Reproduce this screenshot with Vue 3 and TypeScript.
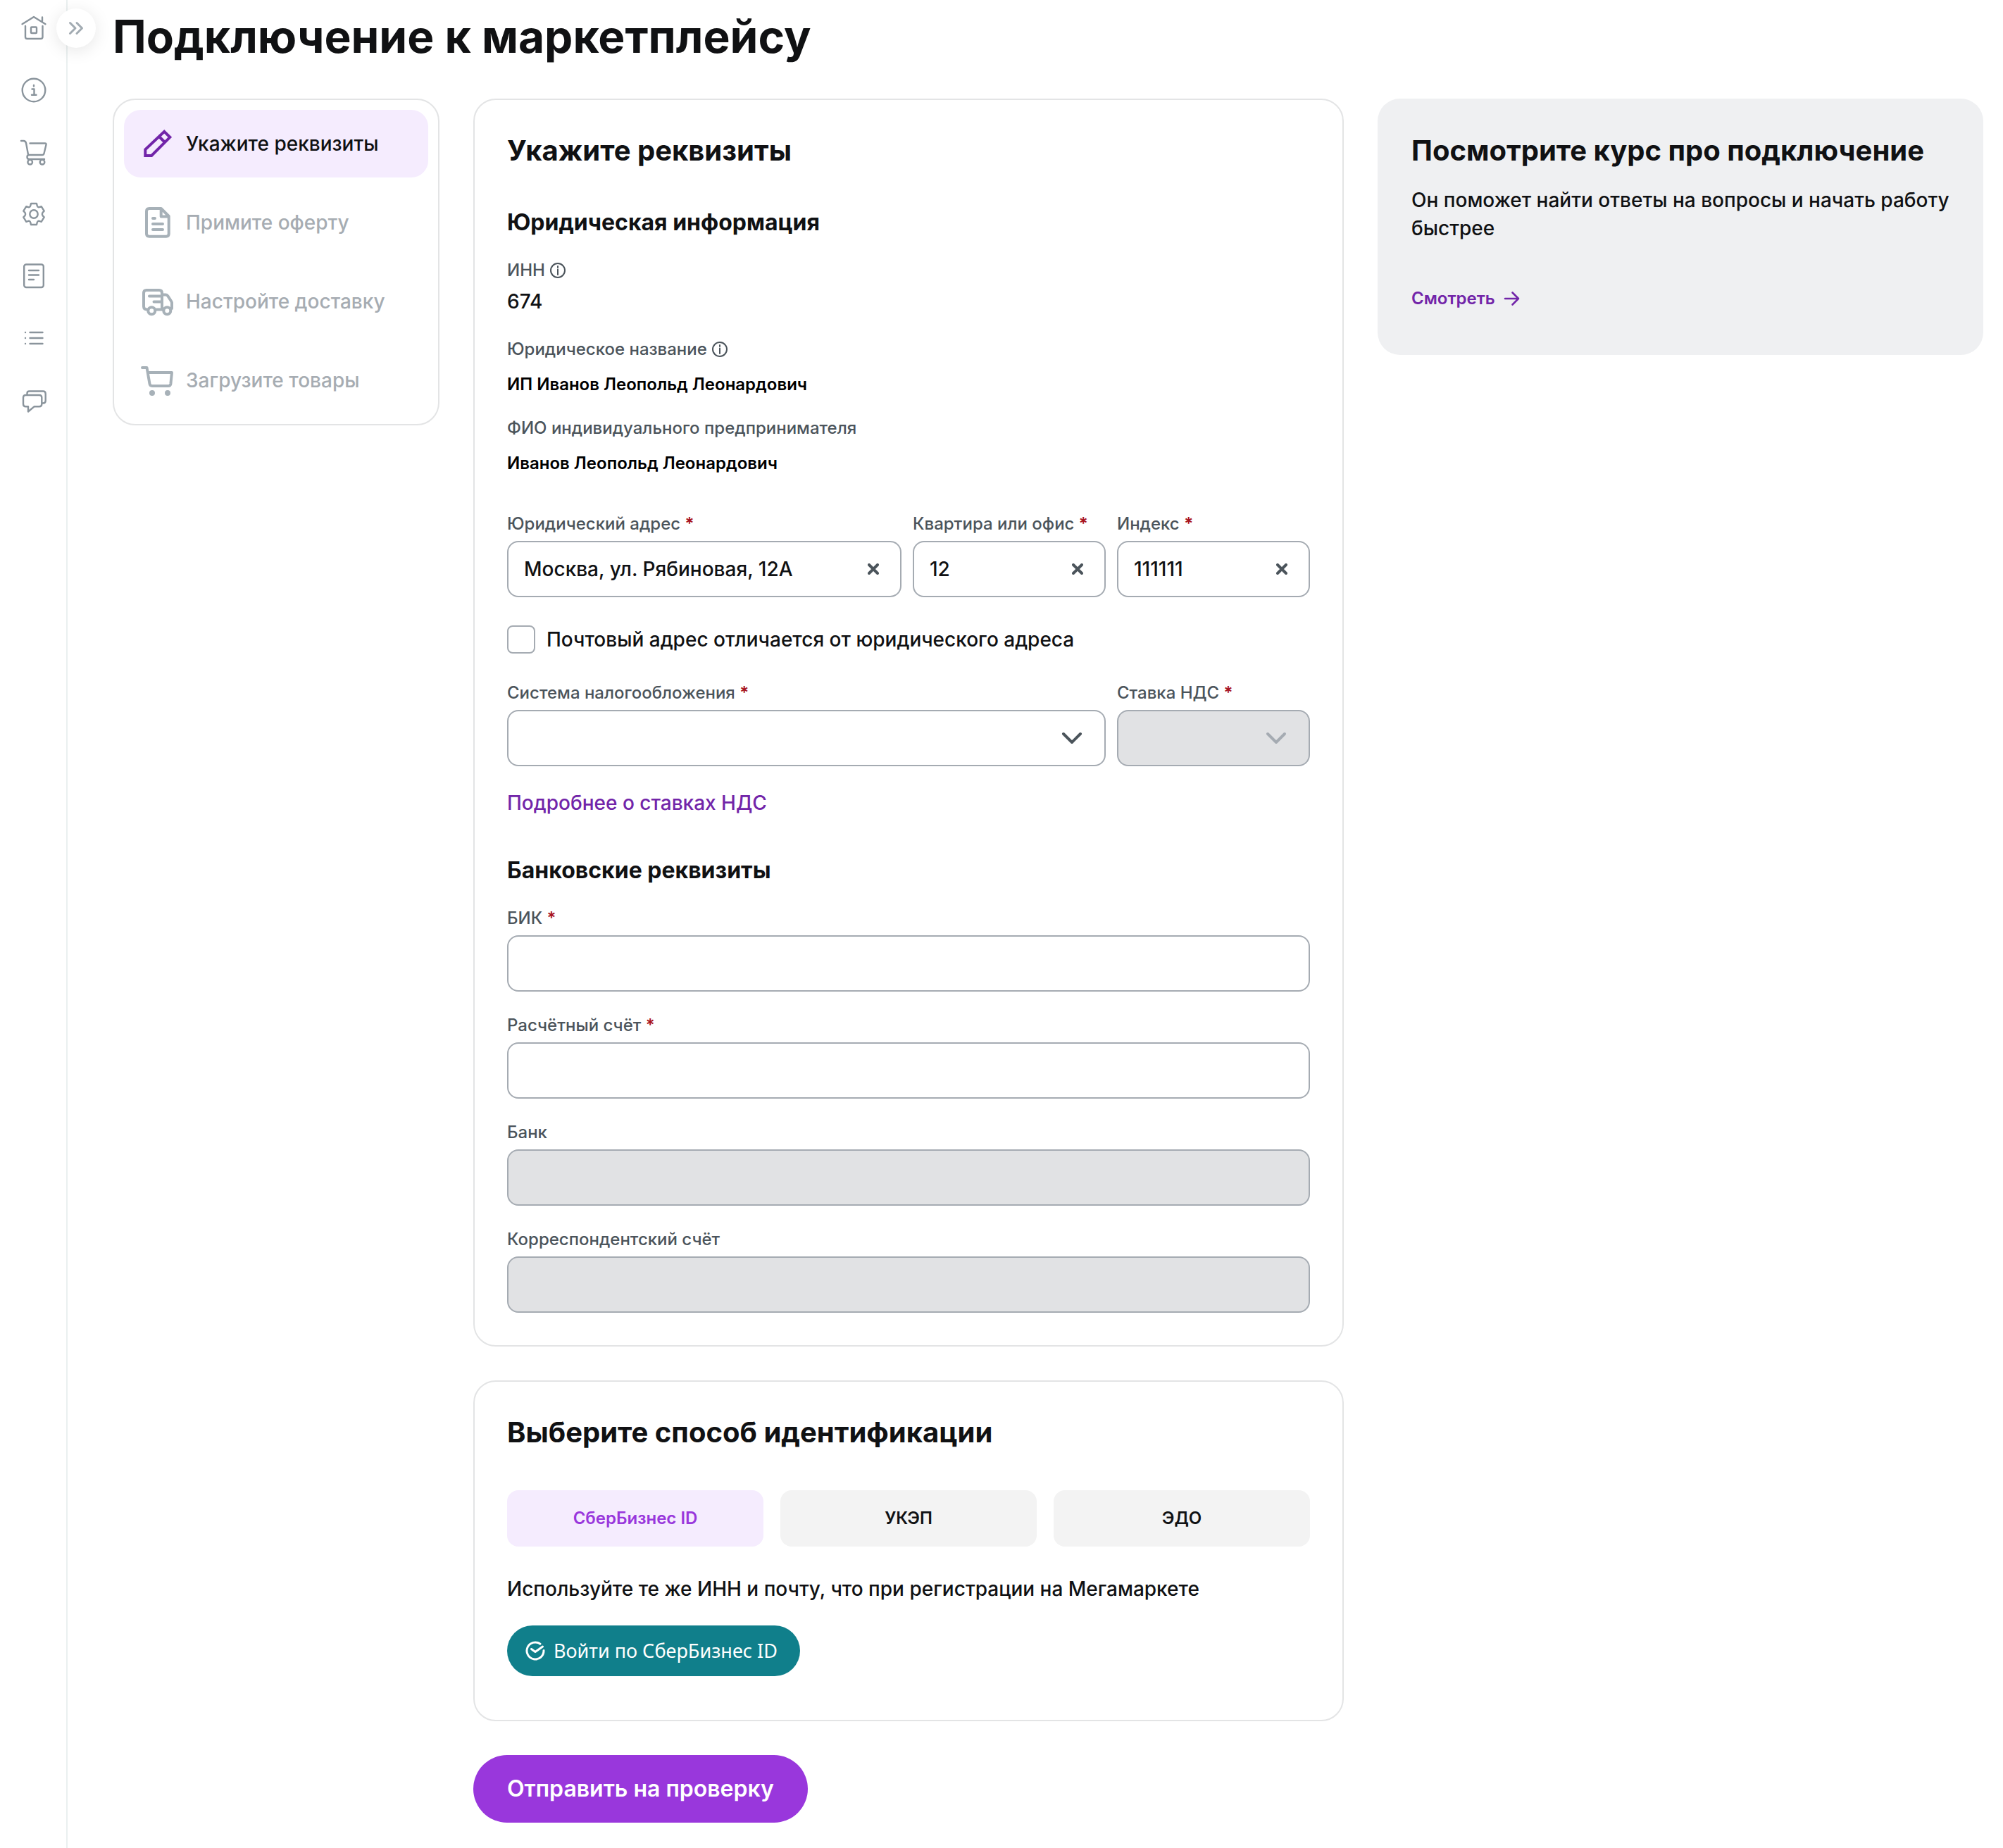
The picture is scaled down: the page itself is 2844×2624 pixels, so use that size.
<script setup lang="ts">
import { reactive, ref } from 'vue'

interface Step {
  id: string
  title: string
}

interface BankField {
  id: string
  label: string
  required: boolean
  disabled: boolean
}

const sections = ['home', 'info', 'orders', 'settings', 'docs', 'list', 'chat']

const steps: Step[] = [
  { id: 'details', title: 'Укажите реквизиты' },
  { id: 'offer', title: 'Примите оферту' },
  { id: 'delivery', title: 'Настройте доставку' },
  { id: 'goods', title: 'Загрузите товары' },
]
const activeStep = ref('details')

const addressFields = reactive([
  { id: 'address', label: 'Юридический адрес', value: 'Москва, ул. Рябиновая, 12А' },
  { id: 'office', label: 'Квартира или офис', value: '12' },
  { id: 'zip', label: 'Индекс', value: '111111' },
])

const bankFields: BankField[] = [
  { id: 'bik', label: 'БИК', required: true, disabled: false },
  { id: 'account', label: 'Расчётный счёт', required: true, disabled: false },
  { id: 'bank', label: 'Банк', required: false, disabled: true },
  { id: 'corr', label: 'Корреспондентский счёт', required: false, disabled: true },
]
const bank = reactive<Record<string, string>>({ bik: '', account: '', bank: '', corr: '' })

const otherPostal = ref(false)
const methods = ['СберБизнес ID', 'УКЭП', 'ЭДО']
const method = ref(methods[0])
</script>

<template>
  <div class="page">
    <nav class="rail" aria-label="Разделы">
      <a v-for="s in sections" :key="s" href="#" class="rail-link" :aria-label="s">
        <svg viewBox="0 0 48 48" class="icon thin">
          <g v-if="s === 'home'">
            <path d="M7.5 18.2 24 8l16.5 10.2M36 8.5v6.5M12 21v15.5q0 2.5 2.5 2.5h19.5q2.500 0 2.500-2.500V21" />
            <rect x="20" y="22.500" width="8" height="8.500" rx="1" />
          </g>
          <g v-else-if="s === 'info'">
            <circle cx="24" cy="24" r="16.300" />
            <path d="M24 17v1.500M21.500 22.500H24.500V30.500M21 30.700h6.500" />
          </g>
          <g v-else-if="s === 'orders'">
            <path d="M6 8h3.500q3 0 3.600 3.500l3 16.500M18.500 11.500h21.500q2 0 1.500 2l-3 12.500q-.5 2-2.500 2H17.500q-3 0-3 3t3 3H39" />
            <circle cx="18.700" cy="38.200" r="3.300" />
            <circle cx="36" cy="38.200" r="3.300" />
          </g>
          <g v-else-if="s === 'settings'">
            <path d="M20 9h8l.8 3.300q.5 1.500 2.200 2l3.700-1.100 4 6.500-2.200 2.200q-1.300 2.100 0 4.200l2.200 2.200-4 6.500-3.700-1.100q-1.700.500-2.200 2L28 39h-8l-.8-3.300q-.5-1.500-2.200-2l-3.700 1.100-4-6.500 2.200-2.200q1.300-2.100 0-4.200l-2.200-2.200 4-6.500 3.700 1.100q1.700-.500 2.200-2z" />
            <circle cx="24" cy="24" r="5.700" />
          </g>
          <g v-else-if="s === 'docs'">
            <rect x="10.200" y="7.500" width="27.600" height="32.500" rx="3" />
            <path d="M17 16h14M17 22.500h14M17 29h7" />
          </g>
          <g v-else-if="s === 'list'">
            <path d="M18.500 16h18M18.500 24h18M18.500 32h18M12 16h.01M12 24h.01M12 32h.01" />
          </g>
          <g v-else>
            <path d="M12.500 17h19.300q3.500 0 3.500 3.500v9.300q0 3.500-3.500 3.500H24.500L16 40.500V33.300h-3.500q-3.500 0-3.500-3.500V20.500q0-3.500 3.500-3.500zM14.500 16.500V14.500q0-3 3-3h19.700q3.500 0 3.500 3.500v10q0 3.500-3.500 3.500H36" />
          </g>
        </svg>
      </a>
      <button type="button" class="expand" aria-label="Развернуть меню">
        <svg viewBox="0 0 24 24" class="chevrons"><path d="m3.500 4.500 7.500 7.500-7.500 7.500M13 4.500l7.500 7.500-7.500 7.500" /></svg>
      </button>
    </nav>

    <main class="content">
      <h1>Подключение к маркетплейсу</h1>
      <div class="columns">
        <aside class="card steps">
          <button
            v-for="step in steps"
            :key="step.id"
            type="button"
            class="step"
            :class="{ active: step.id === activeStep }"
            @click="activeStep = step.id"
          >
            <svg viewBox="0 0 48 48" class="icon bold">
              <path v-if="step.id === 'details'" d="m33.300 6.800 8 8L15.200 41H6.300v-8.700zM26 14l8 8" stroke-linejoin="miter" />
              <path v-else-if="step.id === 'offer'" d="M12 4h16.700L39.700 15v25q0 3.700-3.700 3.700H12q-4 0-4-3.700V8q0-4 4-4zM28.700 4.500V15.500H39M17 18h3M17 26h14M17 34h14" />
              <g v-else-if="step.id === 'delivery'">
                <path d="M9 35.500Q4 35.500 4 31V12q0-4 4-4h18q4 0 4 4v23.500M30 14.500h5q2 0 3.200 1.600l4.800 7.400q1 1.500 1 3V34M22 35.500h9M12 16.500h17M18.500 24.500H29" />
                <circle cx="15.300" cy="37.300" r="5" />
                <circle cx="37.300" cy="37.300" r="5" />
              </g>
              <g v-else>
                <path d="M2 6h6.500l4 23q.5 3 3.500 3h23q3 0 3.400-3L44 13H10.500" />
                <circle cx="16" cy="42" r="2" />
                <circle cx="38" cy="42" r="2" />
              </g>
            </svg>
            <span>{{ step.title }}</span>
          </button>
        </aside>

        <form class="forms" @submit.prevent>
          <section class="card panel">
            <h2>Укажите реквизиты</h2>
            <h3>Юридическая информация</h3>
            <dl class="facts">
              <div>
                <dt>ИНН
                  <svg viewBox="0 0 24 24" class="hint"><circle cx="12" cy="12" r="10" /><path d="M12 10.500V18M12 6v2" /></svg>
                </dt>
                <dd class="number">674</dd>
              </div>
              <div>
                <dt>Юридическое название
                  <svg viewBox="0 0 24 24" class="hint"><circle cx="12" cy="12" r="10" /><path d="M12 10.500V18M12 6v2" /></svg>
                </dt>
                <dd>ИП Иванов Леопольд Леонардович</dd>
              </div>
              <div>
                <dt>ФИО индивидуального предпринимателя</dt>
                <dd>Иванов Леопольд Леонардович</dd>
              </div>
            </dl>

            <div class="row">
              <div v-for="f in addressFields" :key="f.id" class="field">
                <label :for="f.id">{{ f.label }} <b>*</b></label>
                <div class="control">
                  <input :id="f.id" v-model="f.value" type="text" />
                  <button type="button" class="clear" aria-label="Очистить" @click="f.value = ''">
                    <svg viewBox="0 0 16 16"><path d="m2 2 12 12M14 2 2 14" /></svg>
                  </button>
                </div>
              </div>
            </div>

            <label class="check">
              <input v-model="otherPostal" type="checkbox" />
              <span>Почтовый адрес отличается от юридического адреса</span>
            </label>

            <div class="row">
              <div class="field wide">
                <label for="tax">Система налогообложения <b>*</b></label>
                <div class="control">
                  <select id="tax"><option value=""></option></select>
                  <svg viewBox="0 0 32 20" class="arrow"><path d="m4 4 12 12L28 4" /></svg>
                </div>
              </div>
              <div class="field">
                <label for="vat">Ставка НДС <b>*</b></label>
                <div class="control">
                  <select id="vat" disabled><option value=""></option></select>
                  <svg viewBox="0 0 32 20" class="arrow off"><path d="m4 4 12 12L28 4" /></svg>
                </div>
              </div>
            </div>
            <a href="#" class="more">Подробнее о ставках НДС</a>

            <h3>Банковские реквизиты</h3>
            <div class="stack">
              <div v-for="f in bankFields" :key="f.id" class="field">
                <label :for="f.id">{{ f.label }} <b v-if="f.required">*</b></label>
                <input :id="f.id" v-model="bank[f.id]" type="text" :disabled="f.disabled" />
              </div>
            </div>
          </section>

          <section class="card panel">
            <h2>Выберите способ идентификации</h2>
            <div class="tabs">
              <button
                v-for="m in methods"
                :key="m"
                type="button"
                class="tab"
                :class="{ active: m === method }"
                @click="method = m"
              >{{ m }}</button>
            </div>
            <p class="note">Используйте те же ИНН и почту, что при регистрации на Мегамаркете</p>
            <button type="button" class="sber">
              <svg viewBox="0 0 28 28"><path d="M21 4.200A12 12 0 1 0 26 13.500M8.500 11.500 14 15.500 24.500 8" /></svg>
              <span>Войти по СберБизнес ID</span>
            </button>
          </section>

          <button type="submit" class="send">Отправить на проверку</button>
        </form>

        <aside class="course">
          <h2>Посмотрите курс про подключение</h2>
          <p>Он поможет найти ответы на вопросы и начать работу быстрее</p>
          <a href="#">
            Смотреть
            <svg viewBox="0 0 24 24"><path d="M2 12h19M12.500 3.500 21 12l-8.500 8.500" /></svg>
          </a>
        </aside>
      </div>
    </main>
  </div>
</template>

<style>
body {
  margin: 0;
  background: #fff;
}
</style>

<style scoped>
.page {
  display: flex;
  min-height: 100vh;
  font-family: Inter, "Noto Sans", sans-serif;
  font-size: 28px;
  font-weight: 500;
  line-height: 40px;
  color: #101113;
}
.page *,
.page {
  box-sizing: border-box;
}
h1, h2, h3, p, dl, dd {
  margin: 0;
}
button, input, select {
  font: inherit;
  color: inherit;
  margin: 0;
}
button {
  border: 0;
  padding: 0;
  background: none;
  cursor: pointer;
}
svg {
  display: block;
  flex: none;
  fill: none;
  stroke: currentColor;
  stroke-linecap: round;
  stroke-linejoin: round;
}
a {
  color: #7225a9;
  text-decoration: none;
}

.rail {
  position: relative;
  flex: none;
  width: 96px;
  padding: 16px 0 0 2px;
  display: flex;
  flex-direction: column;
  align-items: center;
  gap: 40px;
  border-right: 2px solid #eaf0f0;
}
.rail-link {
  color: #8a949c;
}
.icon {
  width: 48px;
  height: 48px;
}
.thin {
  stroke-width: 2.4;
}
.bold {
  stroke-width: 4;
}
.expand {
  position: absolute;
  top: 12px;
  right: -42px;
  width: 56px;
  height: 56px;
  border-radius: 50%;
  display: grid;
  place-items: center;
  background: #fff;
  color: #a2abb2;
  box-shadow: 0 4px 24px rgba(0, 0, 0, 0.1);
}
.chevrons {
  width: 24px;
  height: 24px;
  stroke-width: 3;
}

.content {
  flex: 1;
  min-width: 0;
  padding: 12px 28px 36px 64px;
}
h1 {
  font-size: 64px;
  line-height: 80px;
  font-weight: 700;
  margin-bottom: 48px;
}
h2 {
  font-size: 40px;
  line-height: 52px;
  font-weight: 700;
}
h3 {
  font-size: 32px;
  line-height: 40px;
  font-weight: 700;
  margin: 56px 0 32px;
}
.columns {
  display: grid;
  grid-template-columns: 464px minmax(0, 1236fr) minmax(0, 860fr);
  gap: 48px;
  align-items: start;
}
.card {
  border: 2px solid #e3e4e5;
  border-radius: 32px;
}
.steps {
  padding: 14px;
  display: flex;
  flex-direction: column;
  gap: 16px;
}
.step {
  display: flex;
  align-items: center;
  gap: 16px;
  padding: 24px;
  border-radius: 24px;
  color: #a6acb2;
  text-align: left;
  white-space: nowrap;
}
.step .icon {
  color: #a7b1b8;
}
.step.active {
  background: #f5ecfe;
  color: #101113;
}
.step.active .icon {
  color: #7225a9;
}

.forms {
  display: flex;
  flex-direction: column;
  gap: 48px;
}
.panel {
  padding: 46px;
}
.facts {
  display: flex;
  flex-direction: column;
  gap: 32px;
  margin-bottom: 56px;
}
dt {
  display: flex;
  align-items: center;
  gap: 6px;
}
dt, .field label {
  font-size: 24px;
  line-height: 32px;
  color: #4b545b;
}
.hint {
  width: 24px;
  height: 24px;
  stroke-width: 2;
}
dd {
  margin-top: 20px;
  font-size: 24px;
  line-height: 28px;
  font-weight: 600;
  color: #000;
}
dd.number {
  margin-top: 8px;
  font-size: 28px;
  line-height: 40px;
  font-weight: 500;
  color: #101113;
}
.row {
  display: grid;
  grid-template-columns: minmax(0, 560fr) minmax(0, 274fr) minmax(0, 274fr);
  gap: 16px;
}
.wide {
  grid-column: span 2;
}
.field {
  display: flex;
  flex-direction: column;
  gap: 8px;
}
.field label {
  white-space: nowrap;
}
b {
  font-weight: 600;
  color: #a8141e;
}
.control {
  position: relative;
}
.field input, .field select {
  display: block;
  width: 100%;
  height: 80px;
  padding: 0 22px;
  border: 2px solid #a5abb2;
  border-radius: 16px;
  background: #fff;
  appearance: none;
}
.field input:disabled, .field select:disabled {
  background: #e1e2e4;
  opacity: 1;
}
.clear {
  position: absolute;
  right: 20px;
  top: 20px;
  width: 40px;
  height: 40px;
  display: grid;
  place-items: center;
  color: #4b545b;
}
.clear svg {
  width: 16px;
  height: 16px;
  stroke-width: 4;
}
.arrow {
  position: absolute;
  right: 32px;
  top: 30px;
  width: 32px;
  height: 20px;
  stroke-width: 4;
  color: #4b545b;
  pointer-events: none;
}
.arrow.off {
  color: #a5abb2;
}
.check {
  display: flex;
  align-items: center;
  gap: 16px;
  margin: 40px 0;
}
.check input {
  appearance: none;
  width: 40px;
  height: 40px;
  border: 2px solid #a5abb2;
  border-radius: 8px;
  background: #fff;
}
.more {
  display: block;
  margin-top: 32px;
}
.stack {
  display: flex;
  flex-direction: column;
  gap: 32px;
}

.tabs {
  display: grid;
  grid-template-columns: repeat(3, minmax(0, 1fr));
  gap: 24px;
  margin: 56px 0 40px;
}
.tab {
  height: 80px;
  border-radius: 16px;
  background: #f3f3f3;
  font-size: 24px;
  line-height: 32px;
  font-weight: 600;
}
.tab.active {
  background: #f5ecfe;
  color: #9937dc;
}
.sber {
  display: flex;
  align-items: center;
  gap: 12px;
  margin: 32px 0 16px;
  height: 72px;
  padding: 0 32px 0 26px;
  border-radius: 36px;
  background: #107f8b;
  color: #fff;
  font-family: "Noto Sans", sans-serif;
  font-size: 27px;
  font-weight: 400;
}
.sber svg {
  width: 28px;
  height: 28px;
  stroke-width: 3;
}
.send {
  align-self: flex-start;
  height: 96px;
  padding: 0 48px;
  border-radius: 48px;
  background: #9937dc;
  color: #fff;
  font-size: 32px;
  font-weight: 600;
}

.course {
  padding: 48px;
  border-radius: 32px;
  background: #eff0f2;
}
.course p {
  margin: 24px 0 48px;
}
.course a {
  display: flex;
  align-items: center;
  gap: 12px;
  height: 64px;
  font-size: 24px;
  line-height: 32px;
  font-weight: 600;
}
.course a svg {
  width: 24px;
  height: 24px;
  stroke-width: 2.6;
}
</style>
